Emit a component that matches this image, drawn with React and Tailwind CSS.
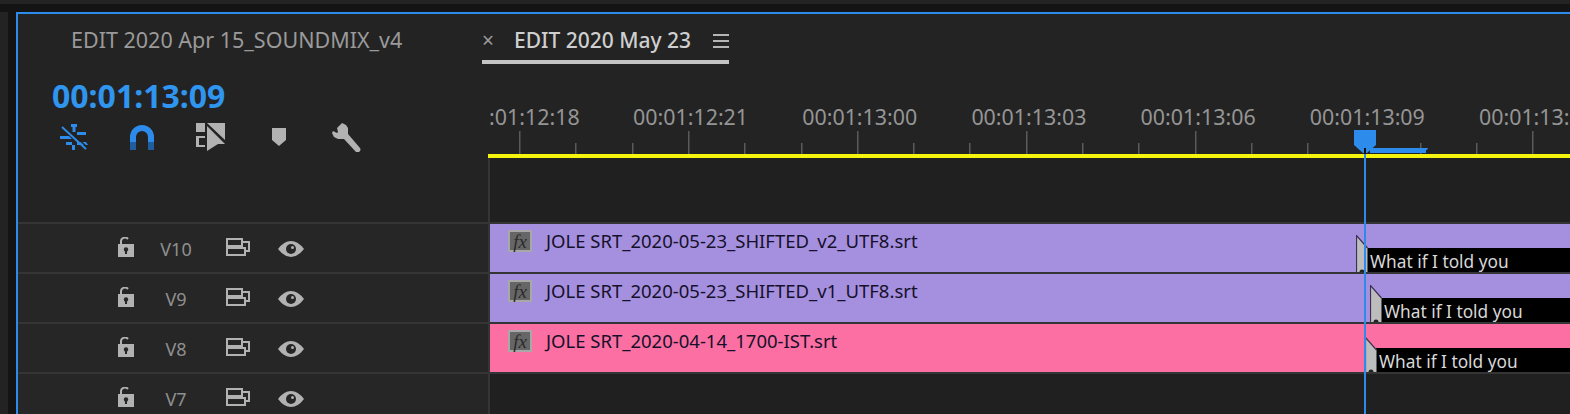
const BLUE = "#2d8ceb";
const GREY = "#b2b2b2";

const rulerLabels = ["00:01:12:21", "00:01:13:00", "00:01:13:03", "00:01:13:06", "00:01:13:09", "00:01:13:"];

const tracks = [
  { id: "V10", name: "JOLE SRT_2020-05-23_SHIFTED_v2_UTF8.srt", color: "bg-[#a58fdf]", width: "w-[866px]", marker: 37 },
  { id: "V9", name: "JOLE SRT_2020-05-23_SHIFTED_v1_UTF8.srt", color: "bg-[#a58fdf]", width: "w-[880px]", marker: 37 },
  { id: "V8", name: "JOLE SRT_2020-04-14_1700-IST.srt", color: "bg-[#fb6fa3]", width: "w-[875px]", marker: 35 },
  { id: "V7" },
];

const SnapIcon = () => (
  <svg width="28" height="26" viewBox="0 0 28 26" fill={BLUE}>
    <path d="M11 0h6v3h-1.500v5h-3V3H11z" />
    <path d="M0 12h9l3 3H0zM17 8h9v3h-9zM6 18h6v3H6zM17 18h9l2 3H17zM12 21h3v5h-3z" />
    <path d="M2 3 26 25" stroke={BLUE} strokeWidth="2" />
    <path d="M5 3 27 23" stroke="#232323" strokeWidth="1.500" />
  </svg>
);

const MagnetIcon = () => (
  <svg width="24" height="25" viewBox="0 0 24 25">
    <path d="M3 17V12a9 9 0 0 1 18 0v5" fill="none" stroke={BLUE} strokeWidth="6" />
    <path d="M0 17h6v8H0zM18 17h6v8h-6z" fill="#1f5d9e" />
  </svg>
);

const InsertIcon = () => (
  <svg width="29" height="28" viewBox="0 0 29 28" fill={GREY}>
    <path d="M0 0h9v9H0z" />
    <path d="M0 13h9v2H3v7h6v2H0z" />
    <path d="M11 0h18v17L11 0zM11 3l18 18h-7l-11 7z" />
  </svg>
);

const MarkerIcon = () => (
  <svg width="14" height="18" viewBox="0 0 14 18" fill={GREY}>
    <path d="M0 0h14v12l-7 6-7-6z" />
  </svg>
);

const WrenchIcon = () => (
  <svg width="29" height="30" viewBox="0 0 29 30" fill={GREY}>
    <path d="M10 1 5 6l1 4-1 1-4-2-1 2 2 4 4 2 6 0 12 13q1.500 1 3 0l1-1q1-1.500 0-3L16 12l0-6-2-3z" />
  </svg>
);

const LockIcon = () => (
  <svg width="16" height="20" viewBox="0 0 16 20">
    <path d="M0 7h16v13H0z" fill={GREY} />
    <circle cx="8" cy="12.500" r="2.200" fill="#262626" />
    <path d="M7 13h2v4H7z" fill="#262626" />
    <path d="M3 8V5a4 4 0 0 1 7-3" fill="none" stroke={GREY} strokeWidth="2" />
  </svg>
);

const SyncIcon = () => (
  <svg width="24" height="18" viewBox="0 0 24 18" fill="none" stroke={GREY} strokeWidth="2">
    <path d="M1 1h15v7H1zM1 10h18v7H1z" />
    <path d="M16 4h7v9h-4" />
  </svg>
);

const EyeIcon = () => (
  <svg width="26" height="16" viewBox="0 0 26 16">
    <path d="M0 8Q6 0 13 0t13 8q-6 8-13 8T0 8z" fill={GREY} />
    <circle cx="13" cy="8" r="5" fill="#262626" />
    <circle cx="14.500" cy="6.500" r="1.500" fill={GREY} />
  </svg>
);

const Ticks = () => {
  const ticks = Array.from({ length: 19 }, (_, i) => i);
  return (
    <svg width="1082" height="24" className="shrink-0">
      {ticks.map((i) => {
        const x = Math.round(31 + i * 56.3);
        return <rect key={i} x={x} y={i % 3 === 0 ? 1 : 13} width="1.500" height={i % 3 === 0 ? 23 : 11} fill="#5a5a5a" />;
      })}
    </svg>
  );
};

// grey in/out flag at the head of the subtitle clip
const ClipMarker = ({ height }) => (
  <svg width="12" height={height} className="absolute left-0 bottom-0">
    <path d={`M0.5 0.500 11.500 13V${height}H0.500z`} fill="#bdbdbd" />
    <path d={`M0.500 ${height}V0.500L11.500 13`} fill="none" stroke="#3b3052" strokeWidth="1.200" />
    <circle cx="6" cy={height} r="2.500" fill="#222" />
  </svg>
);

const Clip = ({ track }) => (
  <div className={`flex h-12 flex-1 ${track.color}`}>
    <div className={`${track.width} flex shrink-0 items-start pl-[18px] pt-[6px]`}>
      <span className="flex h-[22px] w-6 items-center justify-center border-2 border-[#a8a8a8] bg-[#666666] font-['Liberation_Serif',serif] text-[19px] leading-none text-[#2a2a2a] italic">
        fx
      </span>
      <span className="ml-[14px] text-[18.500px] leading-[22px] whitespace-nowrap text-[#15112a]">{track.name}</span>
    </div>
    <div className="relative flex flex-1 flex-col justify-end">
      <ClipMarker height={track.marker} />
      <div className="ml-[11px] h-6 bg-black pl-[3px] text-[17.300px] leading-[27px] whitespace-nowrap text-[#d8d8d8]">What if I told you</div>
    </div>
  </div>
);

const TrackRow = ({ track }) => (
  <div className="flex h-[50px] shrink-0 border-t-2 border-[#353535]">
    <div className="flex w-[470px] shrink-0 items-center bg-[#262626] pt-[2px] pl-[100px]">
      <span className="mb-[5px]"><LockIcon /></span>
      <span className="w-[84px] text-center text-[18px] text-[#8f8f8f]">{track.id}</span>
      <span className="mb-1 ml-2"><SyncIcon /></span>
      <span className="ml-7"><EyeIcon /></span>
    </div>
    <div className="flex flex-1 border-l-2 border-[#353535] bg-[#202020]">{track.name && <Clip track={track} />}</div>
  </div>
);

export default function App() {
  return (
    <div className="flex h-[414px] w-[1570px] flex-col overflow-hidden bg-[#232323] font-['Noto_Sans',sans-serif]">
      <div className="h-1 shrink-0" />
      <div className="h-2 shrink-0 bg-[#141414]" />
      <div className="flex min-h-0 flex-1 pl-2">
        <div className="w-2 shrink-0 bg-[#141414]" />
        <div className="relative flex min-w-0 flex-1 flex-col overflow-hidden border-t-2 border-l-2 border-[#2d8ceb] bg-[#232323]">
          {/* tabs */}
          <div className="flex h-[50px] shrink-0 items-stretch pl-[53px]">
            <div className="w-[411px] pt-[11px] text-[21.500px] leading-[30px] whitespace-nowrap text-[#9a9a9a]">EDIT 2020 Apr 15_SOUNDMIX_v4</div>
            <div className="flex w-[247px] items-start border-b-4 border-[#c4c4c4] pt-[11px]">
              <span className="w-[32px] text-[21px] leading-[30px] text-[#9a9a9a]">×</span>
              <span className="w-[199px] text-[21px] leading-[30px] font-medium whitespace-nowrap text-[#cfcfcf]">EDIT 2020 May 23</span>
              <span className="mt-[9px] flex w-4 flex-col gap-1">
                <i className="h-[2px] bg-[#b5b5b5]" />
                <i className="h-[2px] bg-[#b5b5b5]" />
                <i className="h-[2px] bg-[#b5b5b5]" />
              </span>
            </div>
          </div>

          <div className="flex h-[158px] shrink-0">
            {/* timecode + tools */}
            <div className="w-[470px] shrink-0 pt-[13px] pl-[34px]">
              <div className="text-[32px] leading-[38px] font-bold text-[#2f95ee]">00:01:13:09</div>
              <div className="mt-[7px] flex h-[30px] items-center">
                <span className="ml-2"><SnapIcon /></span>
                <span className="ml-[42px]"><MagnetIcon /></span>
                <span className="ml-[42px]"><InsertIcon /></span>
                <span className="ml-[47px]"><MarkerIcon /></span>
                <span className="ml-[46px]"><WrenchIcon /></span>
              </div>
            </div>

            {/* ruler */}
            <div className="flex min-w-0 flex-1 flex-col">
              <div className="flex h-[90px] flex-col justify-end overflow-hidden">
                <div className="flex text-[21.400px] leading-[26px] whitespace-nowrap text-[#959595]">
                  <span className="w-[145px] shrink-0 pl-[1px]">:01:12:18</span>
                  {rulerLabels.map((label) => (
                    <span key={label} className="w-[169.200px] shrink-0">{label}</span>
                  ))}
                </div>
                <Ticks />
              </div>
              <div className="h-1 shrink-0 bg-[#f4f40e]" />
              <div className="flex-1 border-l-2 border-[#353535] bg-[#202020]" />
            </div>
          </div>

          {tracks.map((track) => (
            <TrackRow key={track.id} track={track} />
          ))}

          {/* playhead, sits over the ruler and clips */}
          <svg width="80" height="290" className="absolute top-[116px] left-[1336px]">
            <path d="M16 18h58l-1 2h-1v3H16z" fill={BLUE} />
            <path d="M0 0h22v15l-9 8H9l-9-8z" fill={BLUE} />
            <path d="M10 18h2v290h-2z" fill={BLUE} />
            <path d="M10 18h2v6h-2z" fill="#101010" />
          </svg>
        </div>
      </div>
    </div>
  );
}
